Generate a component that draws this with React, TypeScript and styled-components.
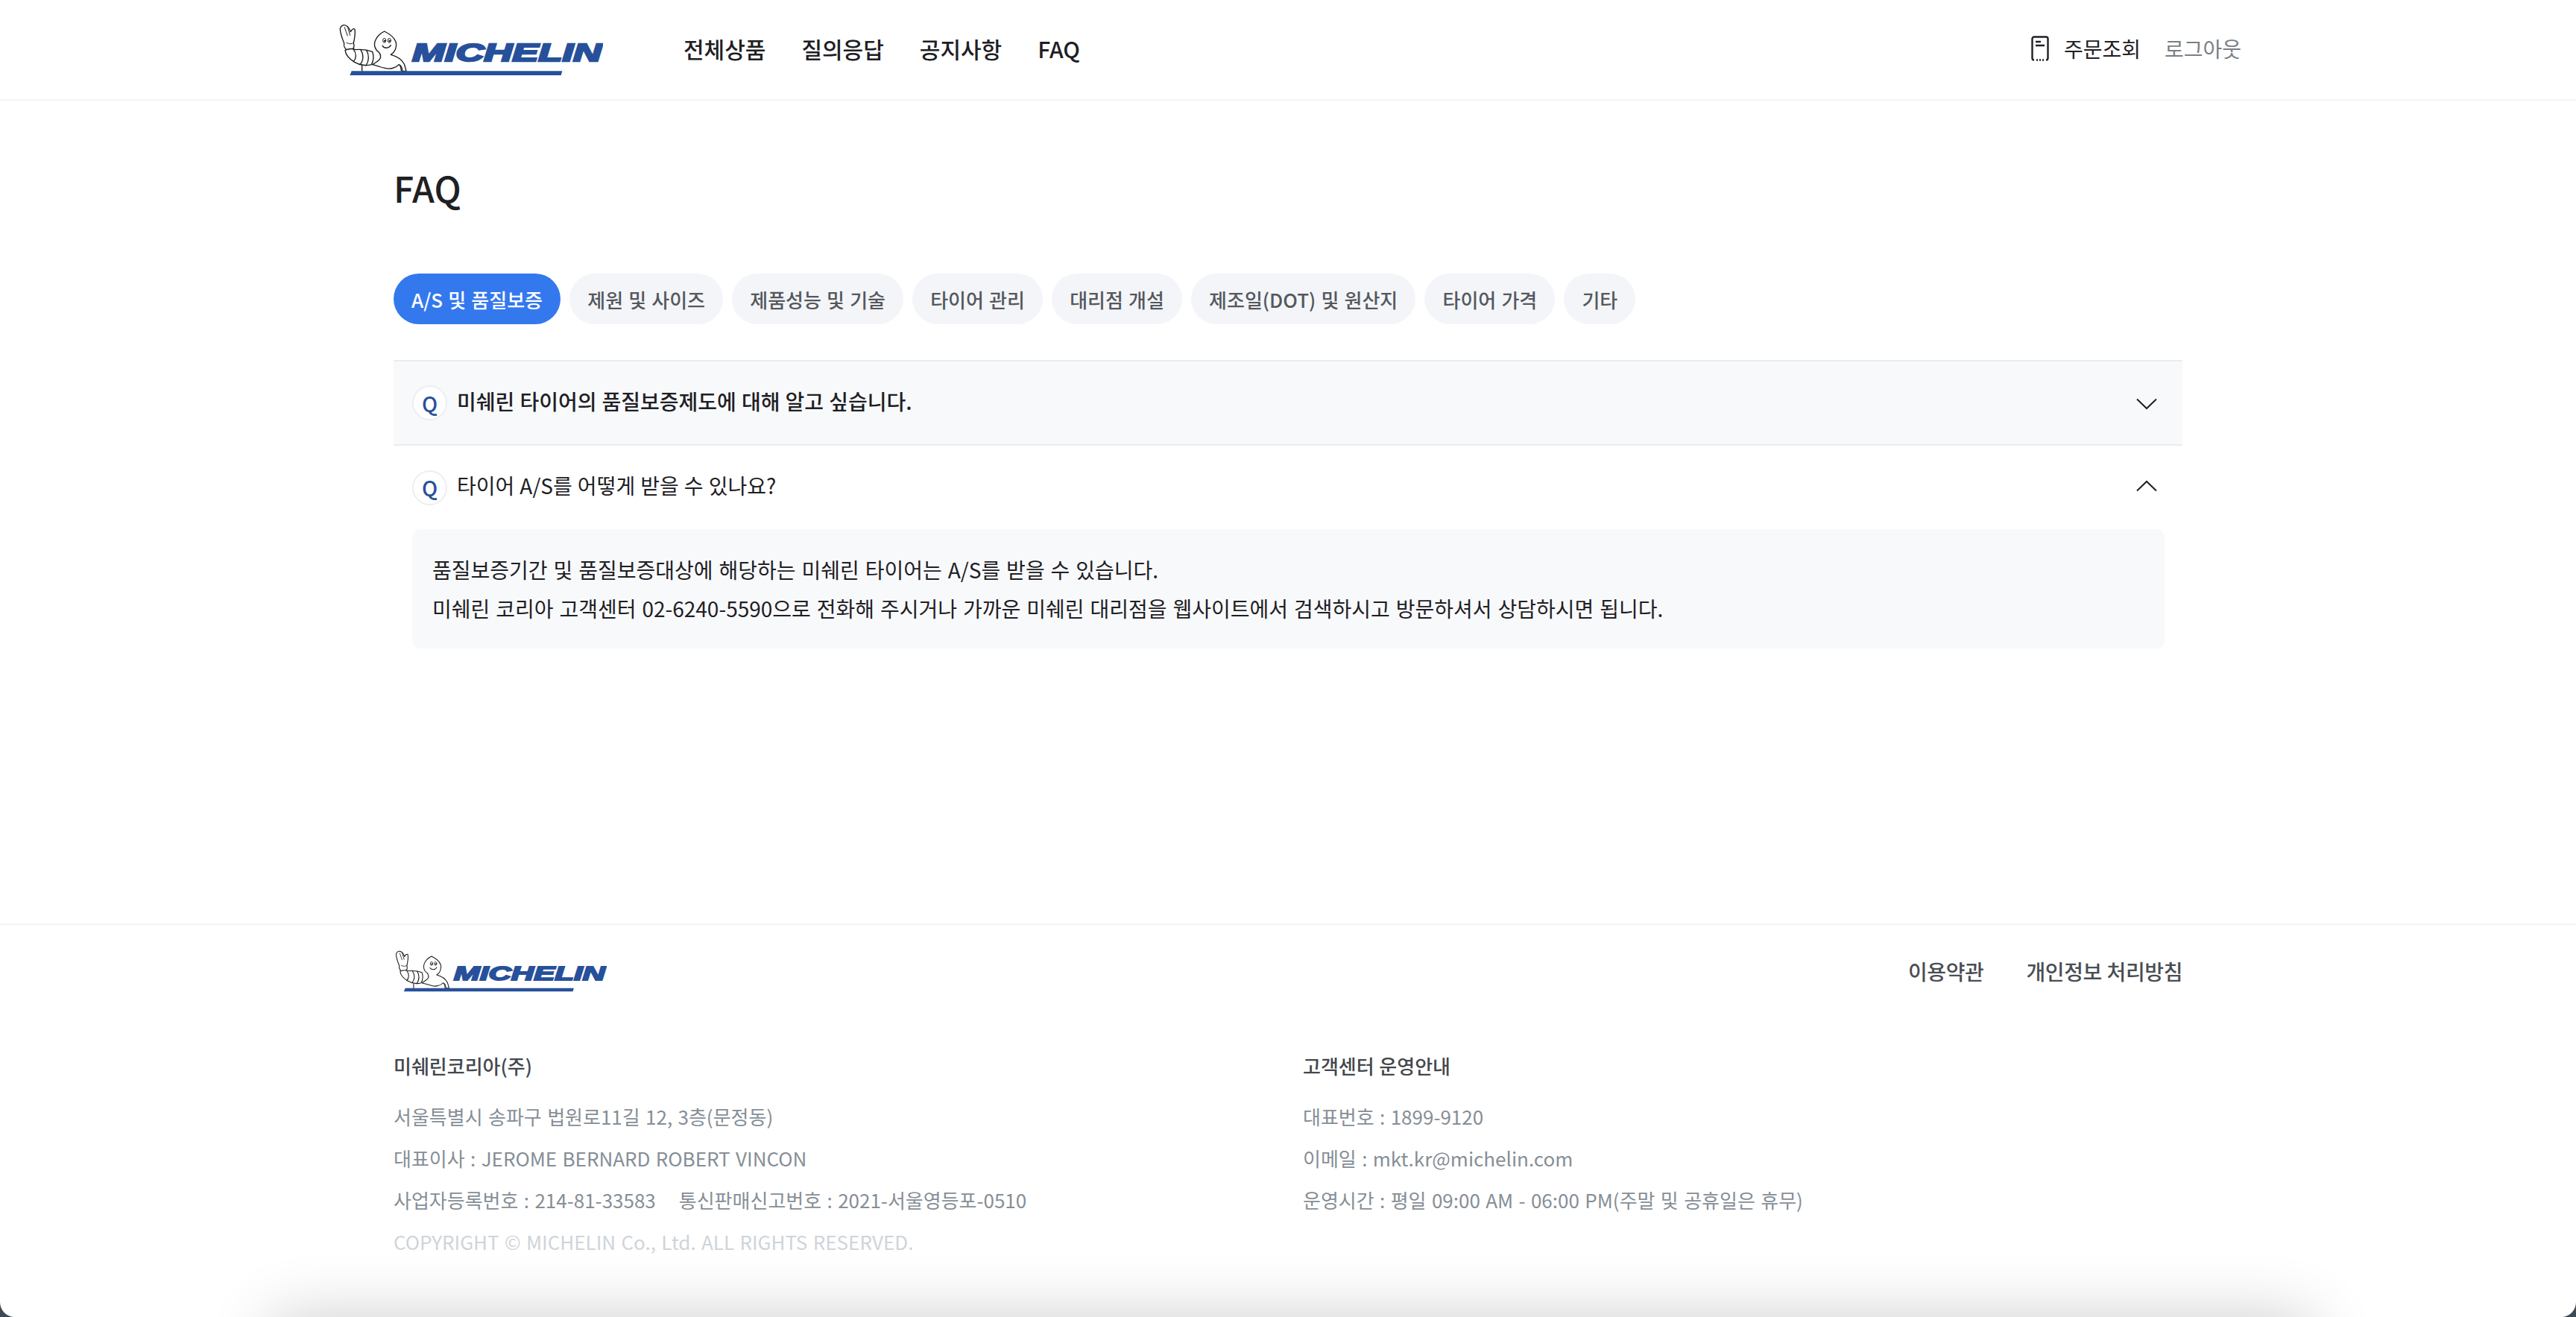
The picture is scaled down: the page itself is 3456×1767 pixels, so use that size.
import React from "react";
import styled, { createGlobalStyle } from "styled-components";

const Global = createGlobalStyle`
  html, body { margin: 0; padding: 0; background: #fff; }
  body { font-family: "Noto Sans CJK KR", "Noto Sans", sans-serif; color: #1e2024; word-spacing: 0.05em; }
  * { box-sizing: border-box; }
`;

const Page = styled.div`
  position: relative;
  width: 3456px;
  height: 1767px;
  overflow: hidden;
  display: flex;
  flex-direction: column;
  background: #fff;
`;

const Header = styled.header`
  height: 135px;
  flex: none;
  border-bottom: 2px solid #f3f4f6;
  display: flex;
  align-items: center;
  padding: 0 449px 0 455px;
`;

const BrandLink = styled.a`
  display: block;
  flex: none;
  line-height: 0;
`;

const Nav = styled.nav`
  display: flex;
  gap: 48px;
  margin: -4px 0 0 108px;
`;

const NavItem = styled.a`
  font-size: 30px;
  font-weight: 500;
  line-height: 44px;
  color: #1e2024;
`;

const HeaderRight = styled.div`
  margin: -4px 0 0 auto;
  display: flex;
  align-items: center;
`;

const OrderLink = styled.a`
  display: flex;
  align-items: center;
  gap: 20px;
  font-size: 28px;
  line-height: 40px;
  color: #1e2024;
`;

const Logout = styled.a`
  margin-left: 32px;
  font-size: 28px;
  line-height: 40px;
  color: #7a7f85;
`;

const Main = styled.main`
  width: 2400px;
  margin: 0 auto;
  flex: 1;
`;

const Title = styled.h1`
  margin: 82px 0 0;
  font-size: 48px;
  line-height: 68px;
  font-weight: 500;
  color: #1e2024;
`;

const Tabs = styled.div`
  display: flex;
  gap: 12.2px;
  margin-top: 82px;
`;

const Tab = styled.button<{ $active?: boolean }>`
  height: 68px;
  padding: 0 24px;
  border: 0;
  border-radius: 34px;
  font-family: inherit;
  font-size: 26px;
  font-weight: 500;
  white-space: nowrap;
  word-spacing: 0.05em;
  background: ${(p) => (p.$active ? "#3478ee" : "#f3f5f8")};
  color: ${(p) => (p.$active ? "#fff" : "#54585e")};
`;

const List = styled.div`
  margin-top: 48px;
  border-top: 2px solid #e9ecef;
`;

const Item = styled.div``;

const Question = styled.div<{ $shaded?: boolean }>`
  height: ${(p) => (p.$shaded ? "113px" : "112px")};
  padding: 0 34px 0 25px;
  display: flex;
  align-items: center;
  background: ${(p) => (p.$shaded ? "#f8f9fb" : "#fff")};
  border-bottom: ${(p) => (p.$shaded ? "2px solid #e9ecef" : "0")};
`;

const QMark = styled.span`
  width: 47px;
  height: 47px;
  flex: none;
  border: 2px solid #eceef1;
  border-radius: 50%;
  background: #fff;
  display: flex;
  align-items: center;
  justify-content: center;
  font-size: 28px;
  font-weight: 500;
  line-height: 1;
  color: #27509b;
`;

const QText = styled.span<{ $strong?: boolean }>`
  margin-left: 13px;
  margin-top: -6px;
  font-size: 28px;
  line-height: 40px;
  font-weight: ${(p) => (p.$strong ? 500 : 400)};
  color: #1e2024;
`;

const Chevron = styled.svg<{ $up?: boolean }>`
  margin-left: auto;
  margin-top: ${(p) => (p.$up ? "-4px" : "3px")};
  flex: none;
`;

const Answer = styled.div`
  margin: 0 24px 0 25px;
  padding: 28px 27px;
  border-radius: 10px;
  background: #f8f9fb;
  font-size: 28px;
  line-height: 52px;
  word-spacing: 0.06em;
  color: #1e2024;
`;

const Footer = styled.footer`
  height: 528px;
  flex: none;
  border-top: 2px solid #f3f4f6;
`;

const FooterInner = styled.div`
  width: 2400px;
  margin: 0 auto;
`;

const FooterTop = styled.div`
  display: flex;
  align-items: center;
  justify-content: space-between;
  padding: 34px 0 0 2px;
`;

const FooterLinks = styled.div`
  display: flex;
  gap: 57px;
`;

const FooterLink = styled.a`
  font-size: 28px;
  font-weight: 500;
  line-height: 40px;
  color: #4a4e54;
  letter-spacing: -0.4px;
`;

const Columns = styled.div`
  display: grid;
  grid-template-columns: 1220px 1fr;
  margin-top: 80px;
`;

const ColTitle = styled.div`
  font-size: 26px;
  font-weight: 500;
  line-height: 38px;
  color: #43474d;
  margin-bottom: 21px;
`;

const Line = styled.div<{ $faint?: boolean }>`
  font-size: 26px;
  line-height: 56px;
  white-space: nowrap;
  word-spacing: 0.06em;
  color: ${(p) => (p.$faint ? "#ced4da" : "#868e96")};
`;

const LineSecond = styled.span`
  margin-left: 31px;
`;

const BottomShade = styled.div`
  position: absolute;
  left: 365px;
  right: 355px;
  bottom: -200px;
  height: 200px;
  box-shadow: 0 0 85px 0 rgba(0, 0, 0, 0.2);
  pointer-events: none;
`;

const Corner = styled.svg<{ $right?: boolean }>`
  position: absolute;
  bottom: 0;
  ${(p) => (p.$right ? "right: 0;" : "left: 0;")}
`;

function Logo({ width, height }: { width: number; height: number }) {
  const ink = "#1a1a1a";
  const blue = "#27509b";
  return (
    <svg width={width} height={height} viewBox="42 46 1062 210" aria-label="MICHELIN">
      <g fill="#fff" stroke={ink} strokeWidth={4} strokeLinejoin="round" strokeLinecap="round">
        <path d="M176 210 C186 204 196 198 204 190 C214 178 208 168 202 160 C186 150 180 130 188 112 C196 92 212 82 224 76 C240 84 262 96 270 118 C276 140 266 160 250 170 C272 176 294 188 304 208 C308 220 310 228 312 236 L296 236 C296 224 292 214 282 210 C270 224 246 230 226 224 C208 220 192 214 176 210 Z" />
        <path d="M62 124 C54 104 46 84 46 66 C48 54 58 48 68 52 C78 56 84 66 88 78 C92 70 100 62 105 68 C108 86 104 106 100 124 C104 136 100 146 92 150 L72 150 C64 144 60 134 62 124 Z" />
        <path d="M66 152 C80 146 98 146 108 150 C128 148 154 150 176 158 C182 176 180 196 172 210 C152 216 124 212 104 200 C84 188 68 170 66 152 Z" />
        <path d="M134 236 L134 214 M100 150 C112 164 112 184 100 198 M128 150 C142 170 140 194 126 210 M152 152 C164 172 162 196 150 214" fill="none" />
        <path d="M64 60 C68 72 72 84 76 94 M76 56 C79 68 82 80 86 92 M72 122 C82 128 92 128 100 122" fill="none" strokeWidth={3} />
        <path d="M286 212 C290 220 292 228 292 236" fill="none" strokeWidth={3.5} />
        <ellipse cx="224" cy="113" rx="6" ry="9" strokeWidth={3} />
        <ellipse cx="244" cy="113" rx="6" ry="9" strokeWidth={3} />
      </g>
      <circle cx="225" cy="115" r="3.5" fill={ink} />
      <circle cx="245" cy="115" r="3.5" fill={ink} />
      <path d="M216 134 C224 146 242 146 250 132" fill="none" stroke={ink} strokeWidth={4} strokeLinecap="round" />
      <path d="M92 236 L940 236 L935 253 L85 253 Z" fill={blue} />
      <text
        x="336"
        y="196"
        fontFamily="'Liberation Sans', Arial, sans-serif"
        fontWeight="700"
        fontStyle="italic"
        fontSize="100"
        fill={blue}
        stroke={blue}
        strokeWidth="7"
        textLength="762"
        lengthAdjust="spacingAndGlyphs"
      >
        MICHELIN
      </text>
    </svg>
  );
}

const tabs = ["A/S 및 품질보증", "제원 및 사이즈", "제품성능 및 기술", "타이어 관리", "대리점 개설", "제조일(DOT) 및 원산지", "타이어 가격", "기타"];

export default function App() {
  return (
    <Page>
      <Global />
      <Header>
        <BrandLink>
          <Logo width={354} height={70} />
        </BrandLink>
        <Nav>
          <NavItem>전체상품</NavItem>
          <NavItem>질의응답</NavItem>
          <NavItem>공지사항</NavItem>
          <NavItem>FAQ</NavItem>
        </Nav>
        <HeaderRight>
          <OrderLink>
            <svg width="24" height="34" viewBox="0 0 24 34" fill="none" stroke="#1e2024" strokeWidth="2.4">
              <path d="M1.5 29 V4 A2.5 2.5 0 0 1 4 1.5 H20 A2.5 2.5 0 0 1 22.5 4 V29" />
              <path d="M1.5 29 V30 A2.5 2.5 0 0 0 4 32.5 M20 32.5 A2.5 2.5 0 0 0 22.5 30 V29 M7 32.5 H9 M11 32.5 H13 M15 32.5 H17" />
              <path d="M6 8 H13 M6 13 H18" />
            </svg>
            주문조회
          </OrderLink>
          <Logout>로그아웃</Logout>
        </HeaderRight>
      </Header>
      <Main>
        <Title>FAQ</Title>
        <Tabs>
          {tabs.map((t, i) => (
            <Tab key={t} $active={i === 0}>
              {t}
            </Tab>
          ))}
        </Tabs>
        <List>
          <Item>
            <Question $shaded>
              <QMark>Q</QMark>
              <QText $strong>미쉐린 타이어의 품질보증제도에 대해 알고 싶습니다.</QText>
              <Chevron width="28" height="16" viewBox="0 0 28 16" fill="none" stroke="#1e2024" strokeWidth="2">
                <path d="M1 1.5 L14 14 L27 1.5" />
              </Chevron>
            </Question>
          </Item>
          <Item>
            <Question>
              <QMark>Q</QMark>
              <QText>타이어 A/S를 어떻게 받을 수 있나요?</QText>
              <Chevron $up width="28" height="16" viewBox="0 0 28 16" fill="none" stroke="#1e2024" strokeWidth="2">
                <path d="M1 14.5 L14 2 L27 14.5" />
              </Chevron>
            </Question>
            <Answer>
              품질보증기간 및 품질보증대상에 해당하는 미쉐린 타이어는 A/S를 받을 수 있습니다.
              <br />
              미쉐린 코리아 고객센터 02-6240-5590으로 전화해 주시거나 가까운 미쉐린 대리점을 웹사이트에서 검색하시고 방문하셔서 상담하시면 됩니다.
            </Answer>
          </Item>
        </List>
      </Main>
      <Footer>
        <FooterInner>
          <FooterTop>
            <Logo width={284} height={56} />
            <FooterLinks>
              <FooterLink>이용약관</FooterLink>
              <FooterLink>개인정보 처리방침</FooterLink>
            </FooterLinks>
          </FooterTop>
          <Columns>
            <div>
              <ColTitle>미쉐린코리아(주)</ColTitle>
              <Line>서울특별시 송파구 법원로11길 12, 3층(문정동)</Line>
              <Line>대표이사 : JEROME BERNARD ROBERT VINCON</Line>
              <Line>
                사업자등록번호 : 214-81-33583
                <LineSecond>통신판매신고번호 : 2021-서울영등포-0510</LineSecond>
              </Line>
              <Line $faint>COPYRIGHT © MICHELIN Co., Ltd. ALL RIGHTS RESERVED.</Line>
            </div>
            <div>
              <ColTitle>고객센터 운영안내</ColTitle>
              <Line>대표번호 : 1899-9120</Line>
              <Line>이메일 : mkt.kr@michelin.com</Line>
              <Line>운영시간 : 평일 09:00 AM - 06:00 PM(주말 및 공휴일은 휴무)</Line>
            </div>
          </Columns>
        </FooterInner>
      </Footer>
      <BottomShade />
      <Corner width="20" height="20" viewBox="0 0 20 20">
        <path d="M0 0 A20 20 0 0 0 20 20 H0 Z" fill="#3d4a55" />
      </Corner>
      <Corner $right width="20" height="20" viewBox="0 0 20 20">
        <path d="M20 0 A20 20 0 0 1 0 20 H20 Z" fill="#3d4a55" />
      </Corner>
    </Page>
  );
}
